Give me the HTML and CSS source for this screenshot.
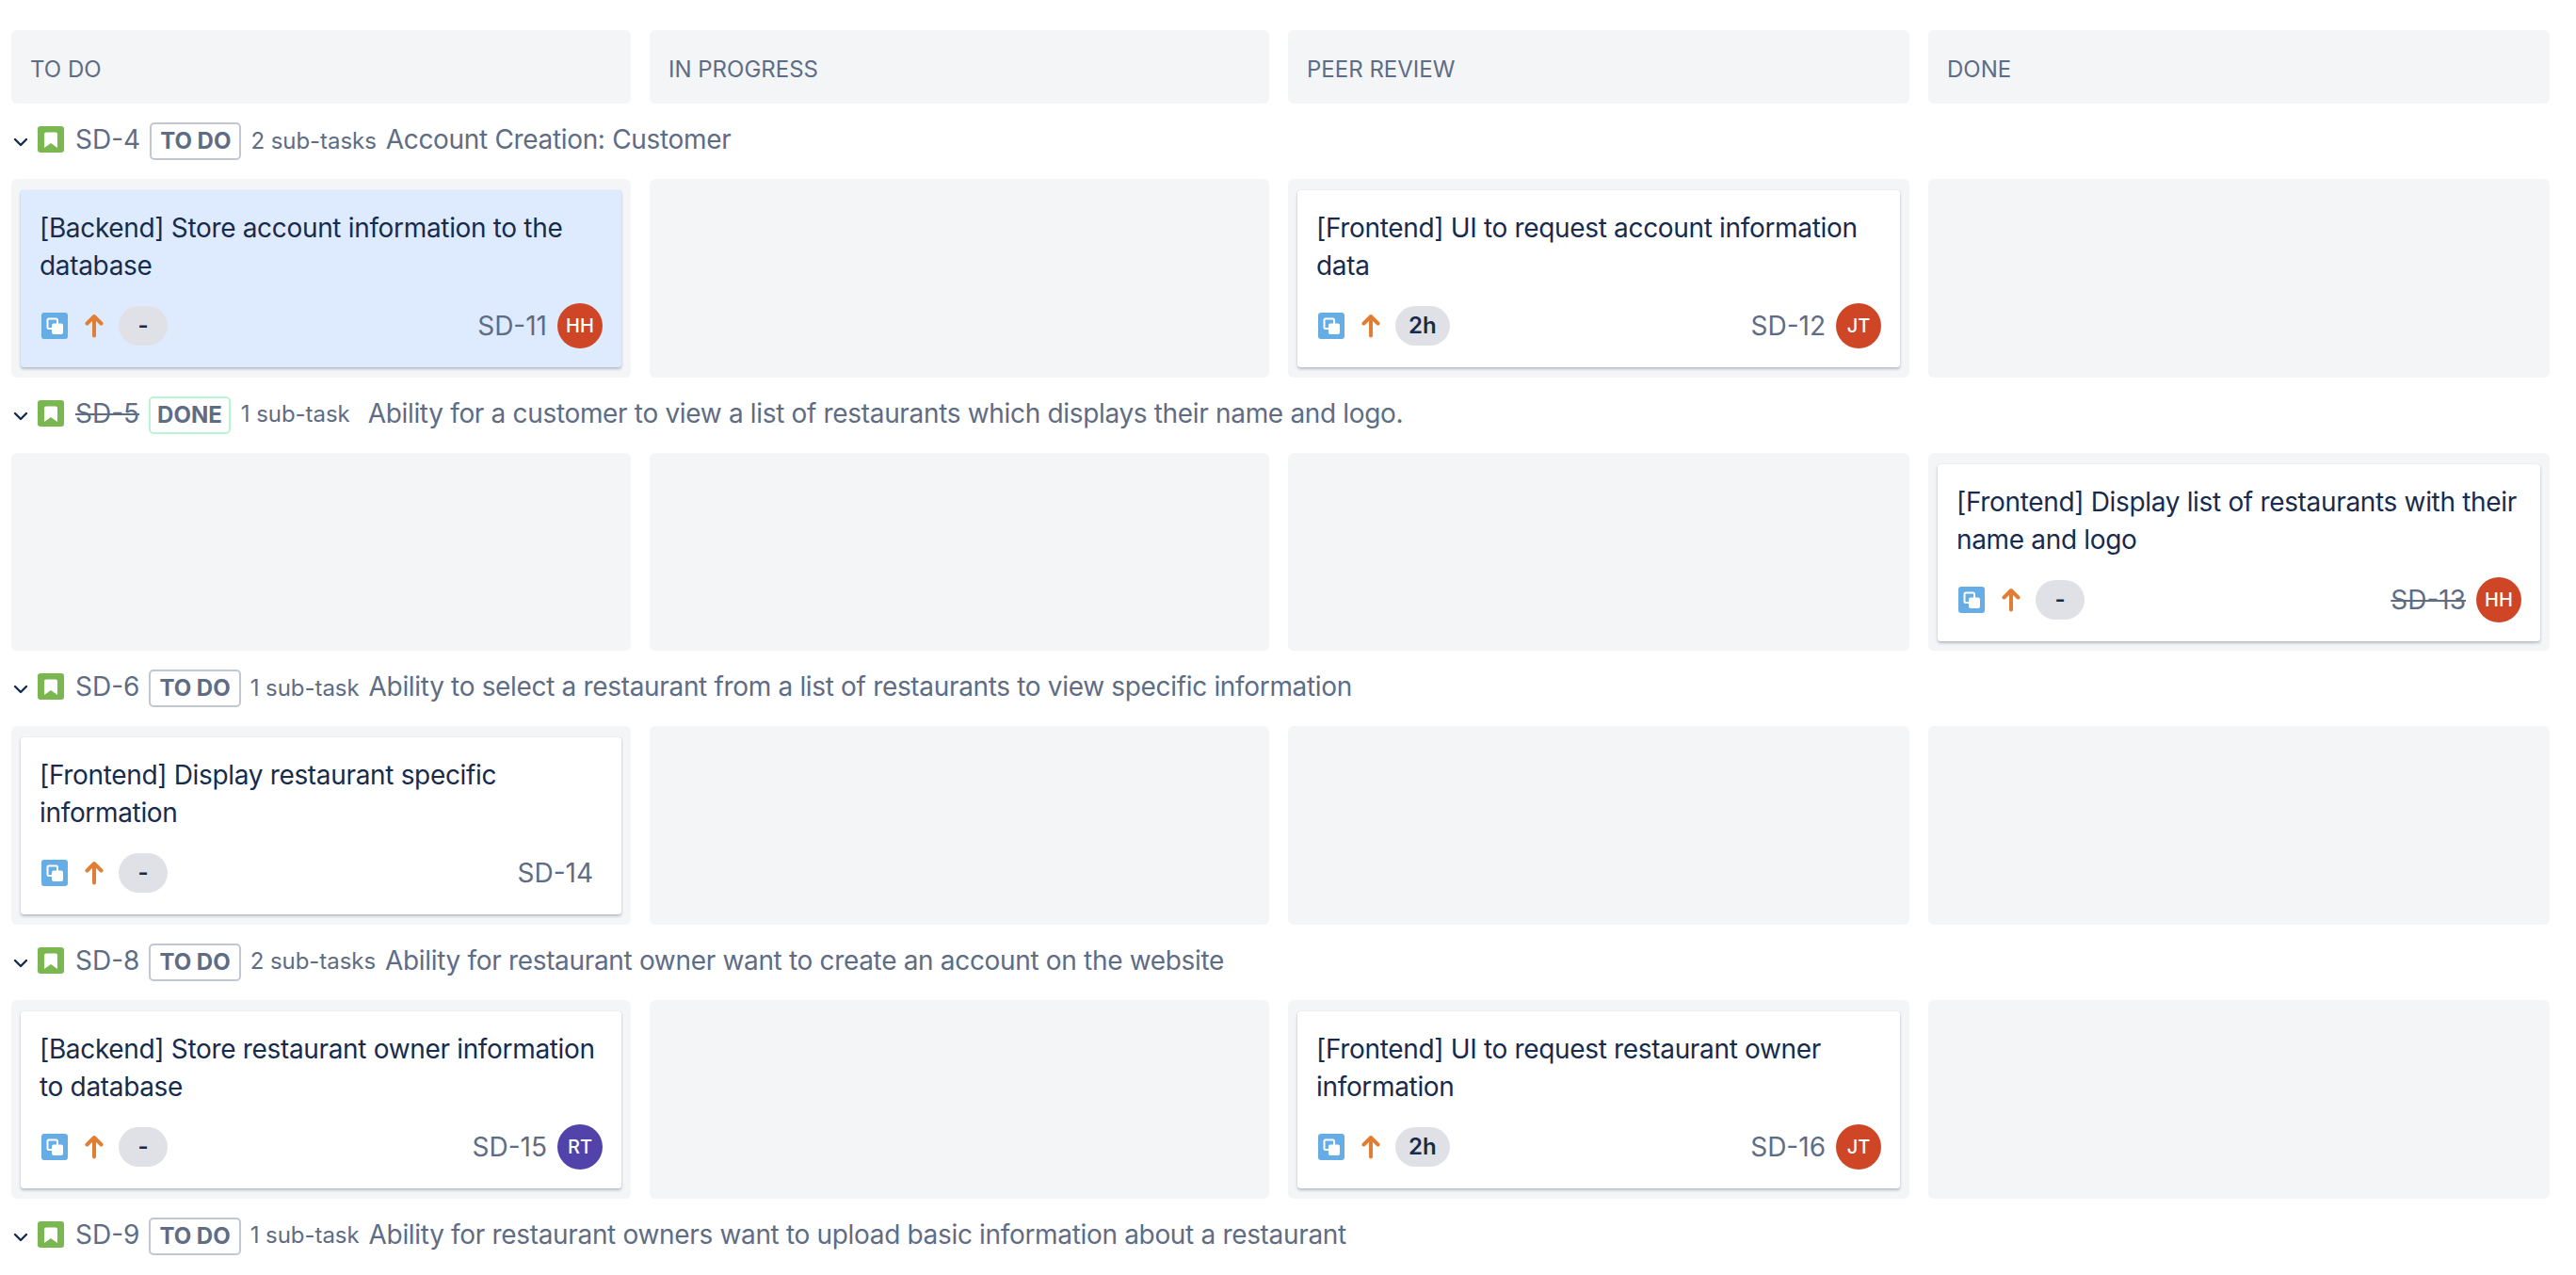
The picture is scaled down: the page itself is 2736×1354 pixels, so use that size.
FILE: index.html
```html
<!DOCTYPE html>
<html lang="en">
<head>
<meta charset="utf-8">
<title>Board</title>
<link rel="stylesheet" href="styles.css">
</head>
<body>
<svg class="defs" width="0" height="0" aria-hidden="true">
  <symbol id="i-story" viewBox="0 0 28 28">
    <rect width="28" height="28" rx="3" fill="#7ab751"/>
    <path d="M9 6.500h10a2 2 0 0 1 2 2V23l-7-5-7 5V8.500a2 2 0 0 1 2-2z" fill="#fff"/>
  </symbol>
  <symbol id="i-sub" viewBox="0 0 28 28">
    <rect width="28" height="28" rx="3" fill="#65ade4"/>
    <rect x="6.500" y="6.500" width="10.500" height="10.500" rx="1.500" fill="none" stroke="#fff" stroke-width="2"/>
    <rect x="11" y="11.500" width="12" height="11.500" rx="2" fill="#fff"/>
  </symbol>
  <symbol id="i-up" viewBox="0 0 20 26">
    <path d="M10 23.500V3M2.500 10.500 10 3l7.500 7.500" fill="none" stroke="#e07f33" stroke-width="4" stroke-linecap="round" stroke-linejoin="round"/>
  </symbol>
  <symbol id="i-chev" viewBox="0 0 16 10">
    <path d="M2 2l6 6 6-6" fill="none" stroke="#172b4d" stroke-width="2.400" stroke-linecap="round" stroke-linejoin="round"/>
  </symbol>
</svg>

<main class="board">
  <div class="columns">
    <div class="col-head">TO DO</div>
    <div class="col-head">IN PROGRESS</div>
    <div class="col-head">PEER REVIEW</div>
    <div class="col-head">DONE</div>
  </div>

  <section class="lane">
    <div class="lane-head">
      <svg class="chev"><use href="#i-chev"/></svg>
      <svg class="story"><use href="#i-story"/></svg>
      <span class="lane-key">SD-4</span>
      <span class="badge">TO DO</span>
      <span class="subs">2 sub-tasks</span>
      <span class="lane-title">Account Creation: Customer</span>
    </div>
    <div class="cells">
      <div class="cell">
        <article class="card card-selected">
          <p class="card-title">[Backend] Store account information to the database</p>
          <div class="card-foot">
            <svg class="sub"><use href="#i-sub"/></svg>
            <svg class="up"><use href="#i-up"/></svg>
            <span class="pill">-</span>
            <span class="card-key">SD-11</span>
            <span class="avatar avatar-red">HH</span>
          </div>
        </article>
      </div>
      <div class="cell"></div>
      <div class="cell">
        <article class="card">
          <p class="card-title">[Frontend] UI to request account information data</p>
          <div class="card-foot">
            <svg class="sub"><use href="#i-sub"/></svg>
            <svg class="up"><use href="#i-up"/></svg>
            <span class="pill">2h</span>
            <span class="card-key">SD-12</span>
            <span class="avatar avatar-red">JT</span>
          </div>
        </article>
      </div>
      <div class="cell"></div>
    </div>
  </section>

  <section class="lane">
    <div class="lane-head lane-head-done">
      <svg class="chev"><use href="#i-chev"/></svg>
      <svg class="story"><use href="#i-story"/></svg>
      <span class="lane-key is-done">SD-5</span>
      <span class="badge badge-done">DONE</span>
      <span class="subs">1 sub-task</span>
      <span class="lane-title">Ability for a customer to view a list of restaurants which displays their name and logo.</span>
    </div>
    <div class="cells">
      <div class="cell"></div>
      <div class="cell"></div>
      <div class="cell"></div>
      <div class="cell">
        <article class="card">
          <p class="card-title">[Frontend] Display list of restaurants with their name and logo</p>
          <div class="card-foot">
            <svg class="sub"><use href="#i-sub"/></svg>
            <svg class="up"><use href="#i-up"/></svg>
            <span class="pill">-</span>
            <span class="card-key is-done">SD-13</span>
            <span class="avatar avatar-red">HH</span>
          </div>
        </article>
      </div>
    </div>
  </section>

  <section class="lane">
    <div class="lane-head">
      <svg class="chev"><use href="#i-chev"/></svg>
      <svg class="story"><use href="#i-story"/></svg>
      <span class="lane-key">SD-6</span>
      <span class="badge">TO DO</span>
      <span class="subs">1 sub-task</span>
      <span class="lane-title">Ability to select a restaurant from a list of restaurants to view specific information</span>
    </div>
    <div class="cells">
      <div class="cell">
        <article class="card">
          <p class="card-title">[Frontend] Display restaurant specific information</p>
          <div class="card-foot">
            <svg class="sub"><use href="#i-sub"/></svg>
            <svg class="up"><use href="#i-up"/></svg>
            <span class="pill">-</span>
            <span class="card-key card-key-solo">SD-14</span>
          </div>
        </article>
      </div>
      <div class="cell"></div>
      <div class="cell"></div>
      <div class="cell"></div>
    </div>
  </section>

  <section class="lane">
    <div class="lane-head">
      <svg class="chev"><use href="#i-chev"/></svg>
      <svg class="story"><use href="#i-story"/></svg>
      <span class="lane-key">SD-8</span>
      <span class="badge">TO DO</span>
      <span class="subs">2 sub-tasks</span>
      <span class="lane-title">Ability for restaurant owner want to create an account on the website</span>
    </div>
    <div class="cells">
      <div class="cell">
        <article class="card">
          <p class="card-title">[Backend] Store restaurant owner information to database</p>
          <div class="card-foot">
            <svg class="sub"><use href="#i-sub"/></svg>
            <svg class="up"><use href="#i-up"/></svg>
            <span class="pill">-</span>
            <span class="card-key">SD-15</span>
            <span class="avatar avatar-purple">RT</span>
          </div>
        </article>
      </div>
      <div class="cell"></div>
      <div class="cell">
        <article class="card">
          <p class="card-title">[Frontend] UI to request restaurant owner information</p>
          <div class="card-foot">
            <svg class="sub"><use href="#i-sub"/></svg>
            <svg class="up"><use href="#i-up"/></svg>
            <span class="pill">2h</span>
            <span class="card-key">SD-16</span>
            <span class="avatar avatar-red">JT</span>
          </div>
        </article>
      </div>
      <div class="cell"></div>
    </div>
  </section>

  <section class="lane">
    <div class="lane-head">
      <svg class="chev"><use href="#i-chev"/></svg>
      <svg class="story"><use href="#i-story"/></svg>
      <span class="lane-key">SD-9</span>
      <span class="badge">TO DO</span>
      <span class="subs">1 sub-task</span>
      <span class="lane-title">Ability for restaurant owners want to upload basic information about a restaurant</span>
    </div>
  </section>
</main>
</body>
</html>
```

FILE: styles.css
```css
* { box-sizing: border-box; }
html, body { margin: 0; height: 100%; background: #fff; overflow: hidden; }
body { font-family: Inter, "Noto Sans", sans-serif; color: #172b4d; }
.defs { position: absolute; }
.board { padding: 32px 0 0 12px; }
.columns, .cells { display: grid; grid-template-columns: 658px 658px 660px 660px; gap: 20px; }
.col-head { height: 78px; background: #f4f5f7; border-radius: 6px; padding: 27px 20px 0; font-size: 24px; line-height: 30px; color: #5e6c84; }
.lane-head { display: flex; align-items: center; height: 80px; padding: 0 0 4px 2px; font-size: 28px; letter-spacing: -.33px; color: #5e6c84; white-space: nowrap; }
.chev { width: 16px; height: 10px; margin-top: 6px; flex: none; }
.story { width: 28px; height: 28px; margin-left: 10px; flex: none; }
.lane-key { margin-left: 12px; letter-spacing: 0; }
.is-done { text-decoration: line-through; }
.badge { margin: 4px 0 0 10px; height: 40px; padding: 0 9px; border: 2px solid #c1c7d0; border-radius: 5px; font-size: 24px; line-height: 36px; font-weight: 700; letter-spacing: 0; }
.badge-done { border-color: #b9f5d5; padding: 0 7px; }
.subs { margin: 2px 0 0 10px; font-size: 24px; letter-spacing: -.05px; }
.lane-title { margin-left: 10px; }
.lane-head-done .subs { margin-left: 11px; }
.lane-head-done .lane-title { margin-left: 19px; }
.cell { height: 210.67px; background: #f4f5f7; border-radius: 6px; padding: 12px 10px 10px; }
.card { height: 188px; padding: 20px 20px 20px 20px; background: #fff; border-radius: 3px; box-shadow: 0 2px 3px rgba(9, 30, 66, .25), 0 0 1px rgba(9, 30, 66, .2); display: flex; flex-direction: column; }
.card-selected { background: #deebff; }
.card-title { margin: 0; font-size: 28px; line-height: 40px; height: 80px; letter-spacing: -.33px; }
.card-foot { display: flex; align-items: center; margin-top: 20px; height: 48px; }
.sub { width: 28px; height: 28px; margin-left: 2px; flex: none; }
.up { width: 20px; height: 26px; margin-left: 18px; flex: none; }
.pill { margin-left: 16px; min-width: 52px; height: 42px; padding: 0 14px; border-radius: 21px; background: #dfe1e6; font-size: 24px; line-height: 42px; font-weight: 600; text-align: center; }
.card-key { margin-left: auto; font-size: 28px; color: #5e6c84; }
.card-key-solo { margin-right: 10px; }
.avatar { margin-left: 11px; width: 48px; height: 48px; border-radius: 50%; color: #fff; font-size: 20px; font-weight: 500; line-height: 48px; text-align: center; flex: none; }
.avatar-red { background: #ce4626; }
.avatar-purple { background: #5243aa; }
```
